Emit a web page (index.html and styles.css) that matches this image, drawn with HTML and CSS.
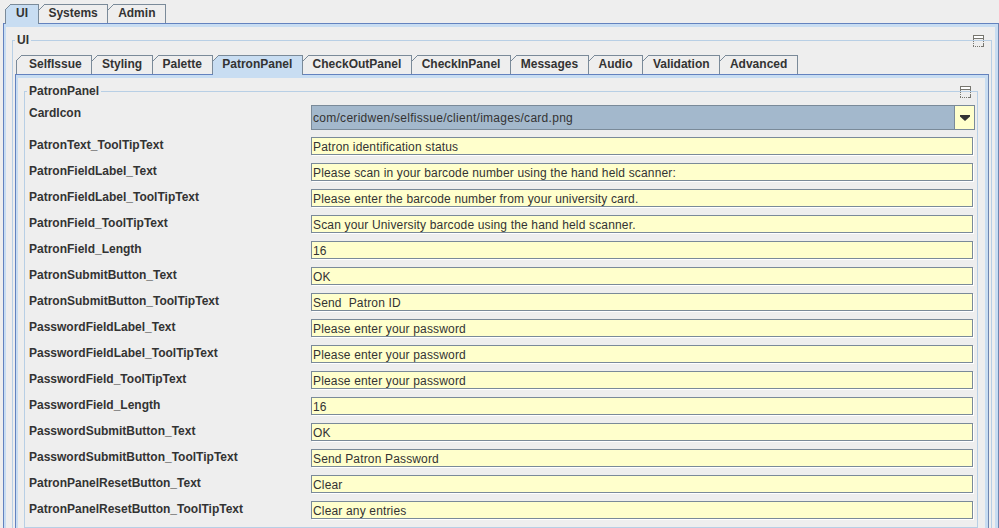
FILE: index.html
```html
<!DOCTYPE html>
<html>
<head>
<meta charset="utf-8">
<title>UI</title>
<link rel="stylesheet" href="styles.css">
</head>
<body>
<div class="tabpane outer">
  <div class="tabstrip">
    <div class="tab selected">UI</div>
    <div class="tab">Systems</div>
    <div class="tab">Admin</div>
  </div>
  <div class="tabbody outer-body">
    <fieldset class="titled ui-box">
      <legend>UI</legend>
      <div class="titled-content ui-content">
        <svg class="maxicon ui-icon" width="11" height="12" viewBox="0 0 11 12" shape-rendering="crispEdges">
          <rect x="0.5" y="0.5" width="10" height="3" fill="#fff" stroke="#77766f"/>
          <path d="M0.5 4v7M10.5 4v5M0 11.5h8" stroke="#77766f" stroke-dasharray="1 1" fill="none"/>
          <path d="M8 11.5h2.5V8.5" stroke="#77766f" fill="none"/>
        </svg>
        <div class="tabpane inner">
          <div class="tabstrip">
            <div class="tab">SelfIssue</div>
            <div class="tab">Styling</div>
            <div class="tab">Palette</div>
            <div class="tab selected">PatronPanel</div>
            <div class="tab">CheckOutPanel</div>
            <div class="tab">CheckInPanel</div>
            <div class="tab">Messages</div>
            <div class="tab">Audio</div>
            <div class="tab">Validation</div>
            <div class="tab">Advanced</div>
          </div>
          <div class="tabbody inner-body">
            <fieldset class="titled patron-box">
              <legend>PatronPanel</legend>
              <div class="titled-content patron-content">
                <svg class="maxicon patron-icon" width="11" height="12" viewBox="0 0 11 12" shape-rendering="crispEdges">
                  <rect x="0.5" y="0.5" width="10" height="3" fill="#fff" stroke="#77766f"/>
                  <path d="M0.5 4v7M10.5 4v5M0 11.5h8" stroke="#77766f" stroke-dasharray="1 1" fill="none"/>
                  <path d="M8 11.5h2.5V8.5" stroke="#77766f" fill="none"/>
                </svg>
                <div class="form">
                  <div class="label">CardIcon</div>
                  <div class="combo">
                    <div class="combo-value">com/ceridwen/selfissue/client/images/card.png</div>
                    <div class="combo-btn">
                      <svg width="10" height="6" viewBox="0 0 10 6"><path d="M0 0h10v1.5L5 6 0 1.5z" fill="#333"/></svg>
                    </div>
                  </div>

                  <div class="label">PatronText_ToolTipText</div>
                  <div class="field">Patron identification status</div>

                  <div class="label">PatronFieldLabel_Text</div>
                  <div class="field">Please scan in your barcode number using the hand held scanner:</div>

                  <div class="label">PatronFieldLabel_ToolTipText</div>
                  <div class="field">Please enter the barcode number from your university card.</div>

                  <div class="label">PatronField_ToolTipText</div>
                  <div class="field">Scan your University barcode using the hand held scanner.</div>

                  <div class="label">PatronField_Length</div>
                  <div class="field">16</div>

                  <div class="label">PatronSubmitButton_Text</div>
                  <div class="field">OK</div>

                  <div class="label">PatronSubmitButton_ToolTipText</div>
                  <div class="field">Send  Patron ID</div>

                  <div class="label">PasswordFieldLabel_Text</div>
                  <div class="field">Please enter your password</div>

                  <div class="label">PasswordFieldLabel_ToolTipText</div>
                  <div class="field">Please enter your password</div>

                  <div class="label">PasswordField_ToolTipText</div>
                  <div class="field">Please enter your password</div>

                  <div class="label">PasswordField_Length</div>
                  <div class="field">16</div>

                  <div class="label">PasswordSubmitButton_Text</div>
                  <div class="field">OK</div>

                  <div class="label">PasswordSubmitButton_ToolTipText</div>
                  <div class="field">Send Patron Password</div>

                  <div class="label">PatronPanelResetButton_Text</div>
                  <div class="field">Clear</div>

                  <div class="label">PatronPanelResetButton_ToolTipText</div>
                  <div class="field">Clear any entries</div>
                </div>
              </div>
            </fieldset>
          </div>
        </div>
      </div>
    </fieldset>
  </div>
</div>
</body>
</html>
```

FILE: styles.css
```css
html, body {
  margin: 0;
  padding: 0;
  height: 100%;
  overflow: hidden;
}

body {
  background: #eeeeee;
  font-family: "Liberation Sans", Arial, sans-serif;
  font-size: 12px;
  color: #333333;
}

/* ---------- tabbed panes ---------- */
.outer {
  margin-left: 3px;
  padding-top: 4px;
}

.tabstrip {
  display: flex;
  align-items: flex-start;
  height: 19px;
  padding-left: 2px;
}

.inner > .tabstrip {
  padding-left: 1px;
}

.tab {
  position: relative;
  box-sizing: border-box;
  height: 19px;
  padding: 0 9.7px;
  border-top: 1px solid #7a8a99;
  border-right: 1px solid #7a8a99;
  background: #eeeeee;
  font-weight: bold;
  line-height: 17px;
  white-space: nowrap;
  color: #333333;
}

.tab:first-child {
  border-left: 1px solid #7a8a99;
  padding-left: 10px;
}

.inner .tab:first-child {
  padding-left: 12px;
}

.tab::before {
  content: "";
  position: absolute;
  left: 0;
  top: -1px;
  width: 6px;
  height: 6px;
  background: linear-gradient(to bottom right,
    #eeeeee calc(50% - 0.6px),
    #7a8a99 calc(50% - 0.6px),
    #7a8a99 calc(50% + 0.6px),
    transparent calc(50% + 0.6px));
}

.tab:first-child::before {
  left: -1px;
}

.tab.selected {
  background: #c8ddf2;
  height: 20px;
  z-index: 1;
}

.tabbody {
  border: 1px solid #6382bf;
  border-right-color: #6f86b0;
  box-shadow: inset 2px 3px 0 #c8ddf2, inset -3px -3px 0 #c8ddf2;
}

.outer-body {
  padding: 9px 6px 20px 8px;
}

.inner-body {
  padding: 9px 10px 20px 8px;
}

/* ---------- titled borders ---------- */
.titled {
  margin: 0;
  padding: 0;
  min-width: 0;
  border: 1px solid #b8cfe5;
}

.titled > legend {
  margin-left: 2px;
  padding: 0 2px;
  line-height: 14px;
  font-weight: bold;
  font-size: 12px;
  color: #333333;
}

.titled-content {
  position: relative;
}

.ui-content {
  padding: 8px 2px 0 2px;
}

.patron-content {
  padding: 7px 0 8px 4px;
}

.maxicon {
  position: absolute;
  top: -12px;
  display: block;
}

.ui-icon {
  right: 7px;
}

.patron-icon {
  right: 6px;
}

/* ---------- form grid ---------- */
.form {
  display: grid;
  grid-template-columns: 282px 1fr;
  row-gap: 8px;
}

.label {
  font-weight: bold;
  line-height: 14px;
  padding-top: 1px;
  white-space: nowrap;
  color: #333333;
}

.combo {
  display: flex;
  box-sizing: border-box;
  height: 25px;
  margin-bottom: -1px;
  margin-right: 2px;
  border: 1px solid #7a8a99;
}

.combo-value {
  flex: 1;
  min-width: 0;
  background: #a3b8cc;
  padding-left: 1px;
  line-height: 24px;
  white-space: nowrap;
  overflow: hidden;
  color: #333333;
  letter-spacing: 0.28px;
}

.combo-btn {
  box-sizing: border-box;
  width: 20px;
  border-left: 1px solid #7a8a99;
  background: #ffffcc;
  display: flex;
  align-items: center;
  justify-content: center;
}

.combo-btn svg {
  display: block;
}

.field {
  box-sizing: border-box;
  height: 18px;
  margin-right: 4px;
  padding: 1px 0 0 1px;
  border: 1px solid #7a8a99;
  background: #ffffcc;
  box-shadow: 1px 1px 0 #ffffff;
  line-height: 16px;
  white-space: pre;
  overflow: hidden;
  color: #333333;
  letter-spacing: 0.16px;
}
```
